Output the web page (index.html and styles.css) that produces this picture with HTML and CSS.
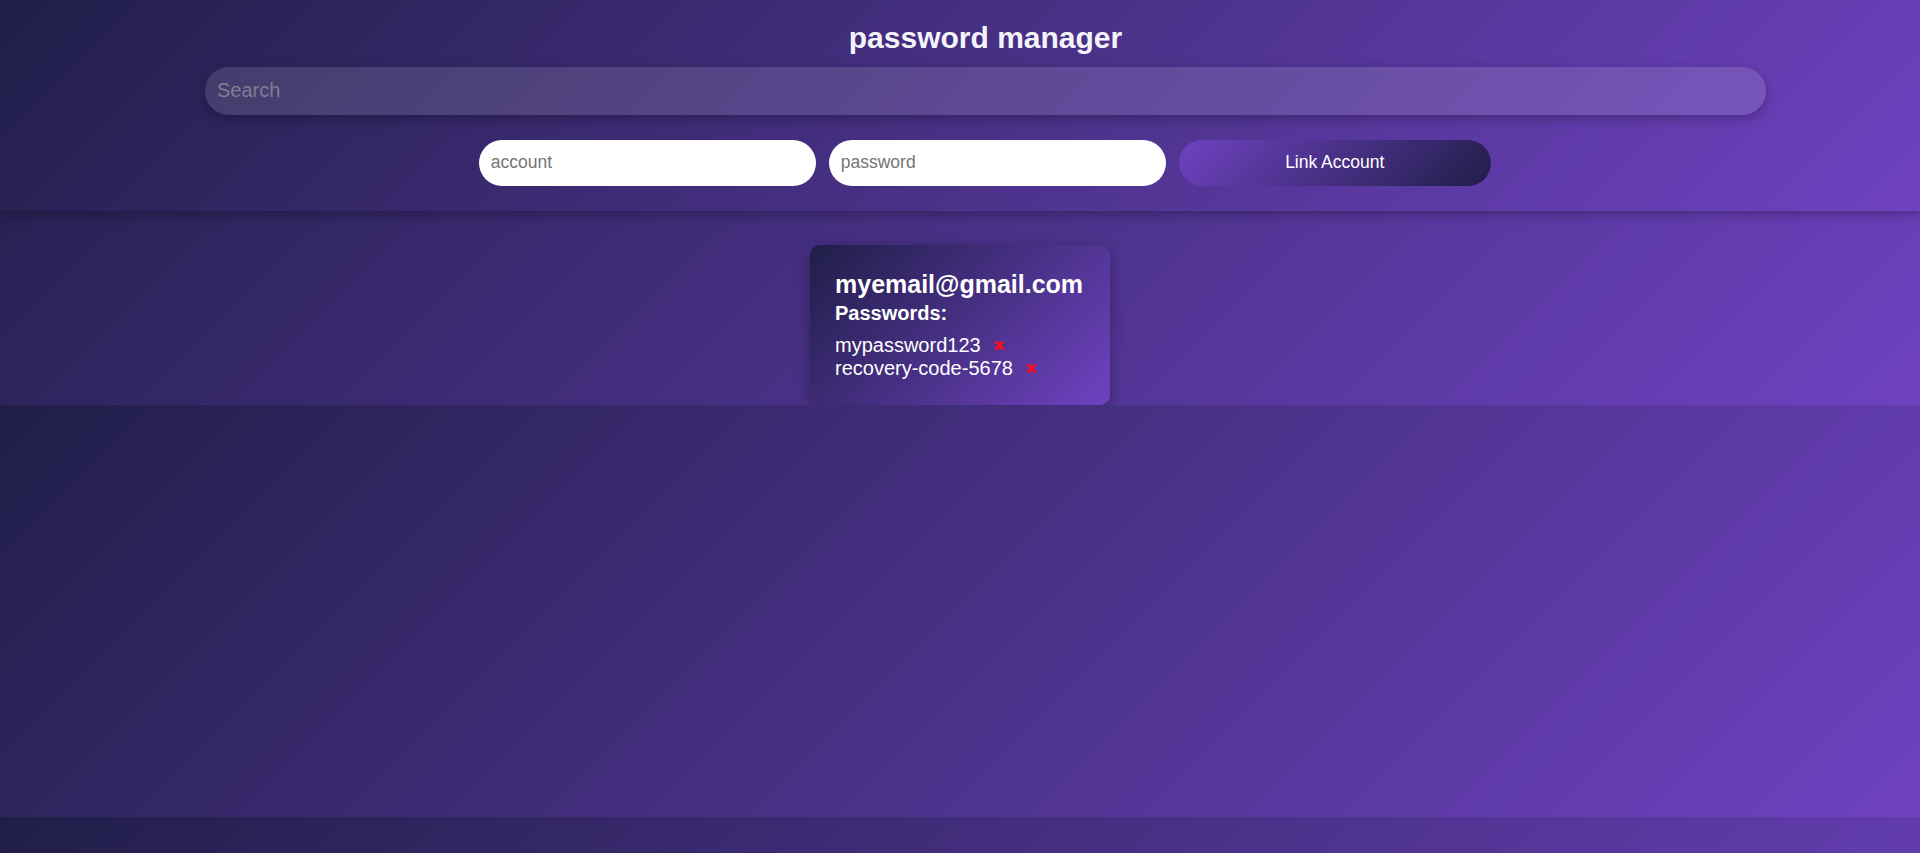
FILE: index.html
```html
<!DOCTYPE html>
<html lang="en">
<head>
<meta charset="utf-8">
<title>password manager</title>
<link rel="stylesheet" href="styles.css">
</head>
<body>
<header class="top">
  <h1 class="title">password manager</h1>
  <input class="search" type="text" placeholder="Search">
  <form class="link-form">
    <input class="field" type="text" placeholder="account">
    <input class="field" type="text" placeholder="password">
    <button class="link-btn" type="button">Link Account</button>
  </form>
</header>
<main class="accounts">
  <div class="card">
    <h2 class="card-email">myemail@gmail.com</h2>
    <h3 class="card-label">Passwords:</h3>
    <ul class="pw-list">
      <li class="pw-item"><span>mypassword123</span><svg class="pw-del" viewBox="0 0 10 10" width="11" height="11"><path d="M1.4 1.4 L8.6 8.6 M8.6 1.4 L1.4 8.6" stroke="#ff0a1e" stroke-width="2.6" fill="none"/></svg></li>
      <li class="pw-item"><span>recovery-code-5678</span><svg class="pw-del" viewBox="0 0 10 10" width="11" height="11"><path d="M1.4 1.4 L8.6 8.6 M8.6 1.4 L1.4 8.6" stroke="#ff0a1e" stroke-width="2.6" fill="none"/></svg></li>
    </ul>
  </div>
</main>
</body>
</html>
```
FILE: styles.css
```css
html {
  background: linear-gradient(135deg, #201e48, #6f42c1);
  background-size: 100% 412px;
  background-position: 0 -7px;
  background-repeat: repeat-y;
}

body {
  margin: 0;
  font-family: "Liberation Sans", Arial, sans-serif;
  color: #fff;
}

.top {
  background: linear-gradient(135deg, #201e48, #6f42c1);
  box-shadow: 0 4px 10px rgba(0, 0, 0, 0.25);
  padding: 20.5px 0 25px 51px;
  display: flex;
  flex-direction: column;
  align-items: center;
  position: relative;
  z-index: 1;
}

.title {
  margin: 0 0 12px;
  font-size: 30px;
  font-weight: bold;
  line-height: normal;
  color: #f5f3fa;
}

.search {
  box-sizing: border-box;
  width: 1561px;
  height: 48px;
  border: none;
  border-radius: 24px;
  padding: 0 12px;
  background: rgba(255, 255, 255, 0.12);
  box-shadow: 0 4px 12px rgba(0, 0, 0, 0.25);
  font-family: "Liberation Sans", Arial, sans-serif;
  font-size: 20px;
  color: #fff;
  outline: none;
}

.search::placeholder {
  color: #837c93;
}

.link-form {
  margin: 25px 1.5px 0 0;
  display: flex;
  gap: 13px;
}

.field {
  box-sizing: border-box;
  width: 337px;
  height: 46px;
  border: none;
  border-radius: 23px;
  padding: 0 12px;
  background: #fff;
  font-family: "Liberation Sans", Arial, sans-serif;
  font-size: 17.5px;
  color: #222;
  outline: none;
}

.field::placeholder {
  color: #757575;
}

.link-btn {
  box-sizing: border-box;
  width: 312px;
  height: 46px;
  border: none;
  border-radius: 23px;
  background: linear-gradient(135deg, #6f42c1, #201e48);
  font-family: "Liberation Sans", Arial, sans-serif;
  font-size: 17.5px;
  color: #fff;
  cursor: pointer;
}

.accounts {
  padding-top: 34px;
  display: flex;
  justify-content: center;
}

.card {
  box-sizing: border-box;
  width: 300px;
  padding: 25px 24px 25px 25px;
  border-radius: 10px;
  background: linear-gradient(135deg, #201e48, #6f42c1);
  box-shadow: 0 4px 15px rgba(0, 0, 0, 0.3);
}

.card-email {
  margin: 0 0 3px;
  font-size: 25px;
  font-weight: bold;
  line-height: normal;
}

.card-label {
  margin: 0 0 9px;
  font-size: 20px;
  font-weight: bold;
  line-height: normal;
}

.pw-list {
  list-style: none;
  margin: 0;
  padding: 0;
}

.pw-item {
  font-size: 20px;
  line-height: 23px;
  display: flex;
  align-items: center;
}

.pw-del {
  margin-left: 13px;
  margin-top: 1px;
}
```
